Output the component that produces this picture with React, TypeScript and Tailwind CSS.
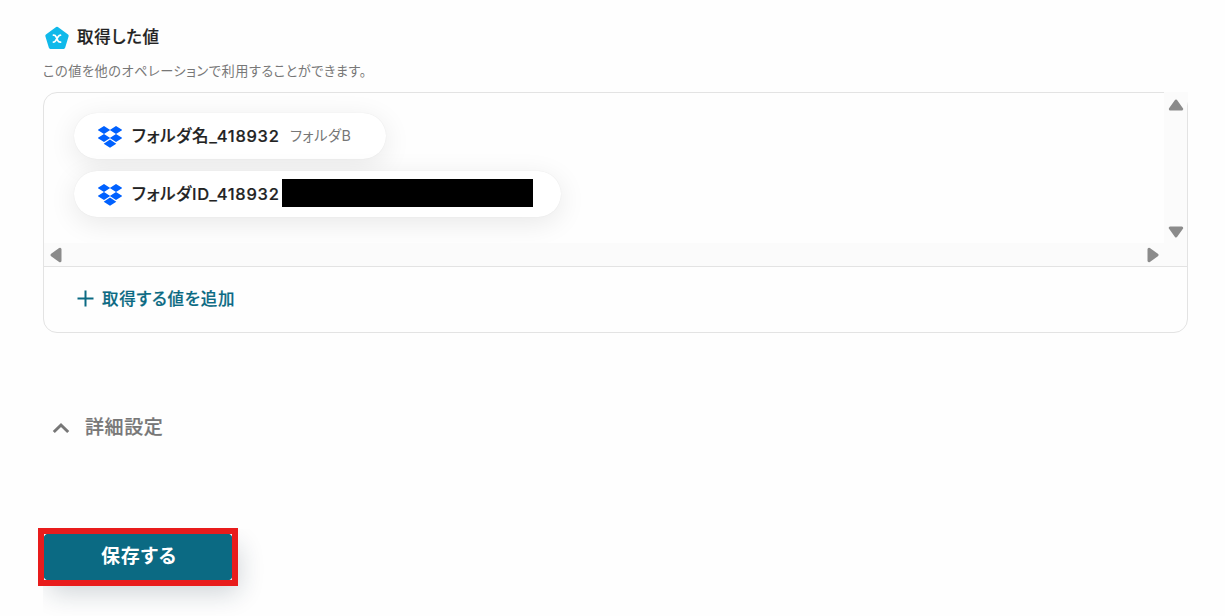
import React from 'react';

interface ValueItem {
  id: string;
  label: string;
  value?: string;
}

const VALUES: ValueItem[] = [
  { id: 'name', label: 'フォルダ名_418932', value: 'フォルダB' },
  { id: 'id', label: 'フォルダID_418932' },
];

function DropboxIcon() {
  return (
    <svg className="mt-[2px] w-6 h-[22px] shrink-0" viewBox="0 0 24 22" fill="#0061ff">
      <path d="M6 0 12.200 4 6 8 -.2 4ZM18 0l6.200 4L18 8l-6.200-4ZM6 8l6.200 4L6 16l-6.200-4ZM18 8l6.200 4-6.200 4-6.200-4ZM12 13.600l6.300 4.100-6.300 4.100-6.300-4.100Z" />
    </svg>
  );
}

function VariableIcon() {
  return (
    <svg className="mt-px w-6 h-6 shrink-0" viewBox="0 0 24 24">
      <path
        d="M12 2.300 22.200 9.700 18.700 21.400H5.300L1.800 9.700Z"
        fill="#10b9ea"
        stroke="#10b9ea"
        strokeWidth="3"
        strokeLinejoin="round"
      />
      <path
        d="M8.400 9.200c1.500-.1 2.100.2 2.700 1.600l1.700 3.800c.5 1.200 1.200 1.600 2.800 1.500M15.500 9.200c-1 0-1.600.4-2.200 1.300l-2.700 4.300c-.6.9-1.200 1.300-2.200 1.300"
        fill="none"
        stroke="#fff"
        strokeWidth="1.700"
        strokeLinecap="round"
      />
    </svg>
  );
}

function ScrollArrow({ className }: { className: string }) {
  return (
    <svg className={`absolute w-4 h-3 ${className}`} viewBox="0 0 16 12">
      <path d="M8 2 13.700 10H2.300Z" fill="#8b8b8b" stroke="#8b8b8b" strokeWidth="3" strokeLinejoin="round" />
    </svg>
  );
}

export default function App() {
  return (
    <main className="h-[616px] overflow-hidden bg-[#fefefe] pl-[43px] pr-[37px] pt-[25px] text-[#222] [font-feature-settings:'palt'] tracking-[0.72px] font-['Inter','Noto_Sans_CJK_JP',sans-serif]">
      <header>
        <h2 className="flex h-6 items-center gap-2 pl-[2px] text-[16.5px] font-medium [-webkit-text-stroke:0.2px]">
          <VariableIcon />
          取得した値
        </h2>
        <p className="mt-[11px] h-[22px] text-[13.2px] leading-[23px] tracking-[0.52px] text-[#777]">
          この値を他のオペレーションで利用することができます。
        </p>
      </header>

      <section className="mt-[10px] h-[241px] rounded-[14px] border border-[#e3e3e3]">
        {/* Scrollable list of values */}
        <div className="relative h-[174px] border-b border-[#e3e3e3]">
          <div className="flex h-[150px] flex-col items-start gap-3 overflow-hidden pl-[30px] pt-5">
            {VALUES.map((item) => (
              <div
                key={item.id}
                className="flex h-[46px] items-center rounded-full bg-white pl-6 shadow-[0_6px_28px_rgba(0,0,0,0.09),0_0_1px_rgba(0,0,0,0.1)]"
              >
                <DropboxIcon />
                <span className="ml-[10px] w-[148px] whitespace-nowrap text-[16.500px] font-medium [-webkit-text-stroke:0.2px]">
                  {item.label}
                </span>
                {item.value ? (
                  <span className="ml-[10px] mr-[34px] w-[62px] whitespace-nowrap text-[14.300px] tracking-[0.5px] text-[#777]">
                    {item.value}
                  </span>
                ) : (
                  <span className="mb-[2px] ml-[2px] mr-7 h-7 w-[251px] bg-black" />
                )}
              </div>
            ))}
          </div>
          {/* Scrollbar tracks */}
          <div className="absolute -top-px right-0 h-[174px] w-[23px] bg-[#fbfbfb]">
            <div className="absolute -right-px top-0 h-[10px] w-[10px] bg-[#fbfbfb]" />
            <ScrollArrow className="left-[3.500px] top-[7px]" />
            <ScrollArrow className="left-[3.500px] top-[134px] rotate-180" />
          </div>
          <div className="absolute bottom-0 left-0 right-0 h-[23px] bg-[#fbfbfb]">
            <ScrollArrow className="left-[3.500px] top-[6px] -rotate-90" />
            <ScrollArrow className="right-[26.500px] top-[6px] rotate-90" />
          </div>
        </div>

        <button className="ml-[33px] mt-[20px] flex h-6 items-center gap-2 text-[16.500px] font-medium text-[#0b6a83] [-webkit-text-stroke:0.2px]">
          <svg className="mb-[2px] w-[17px] h-[17px]" viewBox="0 0 17 17" fill="none" stroke="currentColor" strokeWidth="2">
            <path d="M8.500 .5v16M.5 8.500h16" />
          </svg>
          取得する値を追加
        </button>
      </section>

      <button className="ml-[9px] mt-[81px] flex h-7 items-center gap-[15px] text-[19px] font-medium tracking-[0.6px] text-[#777] [-webkit-text-stroke:0.2px]">
        <svg className="w-[18px] h-3" viewBox="0 0 18 12" fill="none" stroke="currentColor" strokeWidth="3">
          <path d="m1.800 10 7.200-7 7.200 7" />
        </svg>
        詳細設定
      </button>

      {/* Save */}
      <div className="relative mt-[91px] h-[48px] w-[190px]">
        <div className="h-full w-full [clip-path:inset(-4px_-40px_-40px_0)]">
          <button className="h-full w-full rounded-[7px] bg-[#0b6a83] pl-[2px] text-[19px] font-bold tracking-[0.9px] text-white shadow-[6px_12px_26px_rgba(20,45,65,0.2)]">
            保存する
          </button>
        </div>
        <div className="pointer-events-none absolute -left-[5.500px] -top-[5px] h-[58px] w-[200px] border-[6px] border-[#e81c1c]" />
      </div>
    </main>
  );
}
